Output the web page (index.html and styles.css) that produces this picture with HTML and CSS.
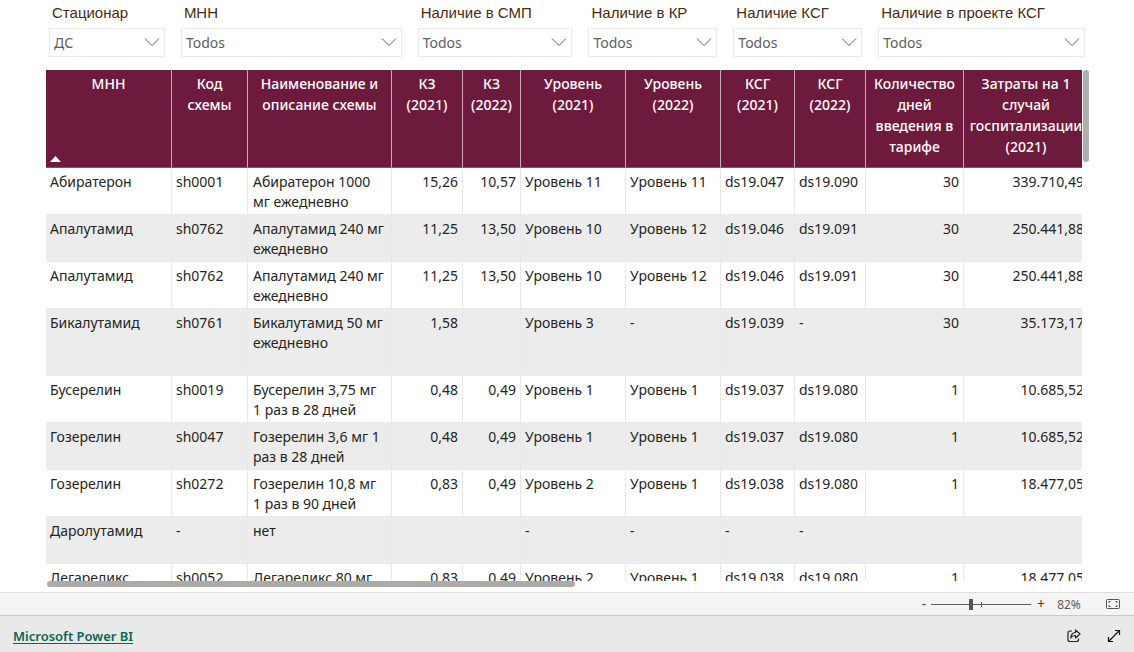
FILE: index.html
```html
<!DOCTYPE html>
<html lang="ru">
<head>
<meta charset="utf-8">
<meta name="viewport" content="width=device-width, initial-scale=1">
<title>Microsoft Power BI</title>
<link rel="stylesheet" href="styles.css">
</head>
<body>
<svg class="defs" aria-hidden="true">
  <symbol id="chevron" viewBox="0 0 16 10"><path d="M1 1.5 8 8.5 15 1.5" fill="none" stroke="currentColor"/></symbol>
</svg>
<main class="report">
  <form class="filters">
    <div class="filter"><label for="f1">Стационар</label><div class="pick"><select id="f1"><option>ДС</option></select><svg class="chev"><use href="#chevron"/></svg></div></div>
    <div class="filter"><label for="f2">МНН</label><div class="pick"><select id="f2"><option>Todos</option></select><svg class="chev"><use href="#chevron"/></svg></div></div>
    <div class="filter"><label for="f3">Наличие в СМП</label><div class="pick"><select id="f3"><option>Todos</option></select><svg class="chev"><use href="#chevron"/></svg></div></div>
    <div class="filter"><label for="f4">Наличие в КР</label><div class="pick"><select id="f4"><option>Todos</option></select><svg class="chev"><use href="#chevron"/></svg></div></div>
    <div class="filter"><label for="f5">Наличие КСГ</label><div class="pick"><select id="f5"><option>Todos</option></select><svg class="chev"><use href="#chevron"/></svg></div></div>
    <div class="filter"><label for="f6">Наличие в проекте КСГ</label><div class="pick"><select id="f6"><option>Todos</option></select><svg class="chev"><use href="#chevron"/></svg></div></div>
  </form>
  <section class="grid">
    <div class="scroller">
      <table class="data">
        <colgroup><col class="c-mnn"><col class="c-code"><col class="c-name"><col class="c-kz1"><col class="c-kz2"><col class="c-lvl1"><col class="c-lvl2"><col class="c-ksg1"><col class="c-ksg2"><col class="c-days"><col class="c-cost"></colgroup>
        <thead>
          <tr><th>МНН<svg class="sort" viewBox="0 0 11 6"><path d="M0 6 5.500 0 11 6Z" fill="#fff"/></svg></th><th>Код схемы</th><th>Наименование и описание схемы</th><th>КЗ (2021)</th><th>КЗ (2022)</th><th>Уровень (2021)</th><th>Уровень (2022)</th><th>КСГ (2021)</th><th>КСГ (2022)</th><th>Количество дней введения в тарифе</th><th>Затраты на 1 случай госпитализации (2021)</th></tr>
        </thead>
        <tbody>
          <tr><td>Абиратерон</td><td>sh0001</td><td class="name">Абиратерон 1000 мг ежедневно</td><td class="n">15,26</td><td class="n">10,57</td><td>Уровень 11</td><td>Уровень 11</td><td>ds19.047</td><td>ds19.090</td><td class="n">30</td><td class="n">339.710,49</td></tr>
          <tr><td>Апалутамид</td><td>sh0762</td><td class="name">Апалутамид 240 мг ежедневно</td><td class="n">11,25</td><td class="n">13,50</td><td>Уровень 10</td><td>Уровень 12</td><td>ds19.046</td><td>ds19.091</td><td class="n">30</td><td class="n">250.441,88</td></tr>
          <tr><td>Апалутамид</td><td>sh0762</td><td class="name">Апалутамид 240 мг ежедневно</td><td class="n">11,25</td><td class="n">13,50</td><td>Уровень 10</td><td>Уровень 12</td><td>ds19.046</td><td>ds19.091</td><td class="n">30</td><td class="n">250.441,88</td></tr>
          <tr class="tall"><td>Бикалутамид</td><td>sh0761</td><td class="name">Бикалутамид 50 мг ежедневно</td><td class="n">1,58</td><td></td><td>Уровень 3</td><td>-</td><td>ds19.039</td><td>-</td><td class="n">30</td><td class="n">35.173,17</td></tr>
          <tr><td>Бусерелин</td><td>sh0019</td><td class="name">Бусерелин 3,75 мг 1 раз в 28 дней</td><td class="n">0,48</td><td class="n">0,49</td><td>Уровень 1</td><td>Уровень 1</td><td>ds19.037</td><td>ds19.080</td><td class="n">1</td><td class="n">10.685,52</td></tr>
          <tr><td>Гозерелин</td><td>sh0047</td><td class="name">Гозерелин 3,6 мг 1 раз в 28 дней</td><td class="n">0,48</td><td class="n">0,49</td><td>Уровень 1</td><td>Уровень 1</td><td>ds19.037</td><td>ds19.080</td><td class="n">1</td><td class="n">10.685,52</td></tr>
          <tr><td>Гозерелин</td><td>sh0272</td><td class="name">Гозерелин 10,8 мг 1 раз в 90 дней</td><td class="n">0,83</td><td class="n">0,49</td><td>Уровень 2</td><td>Уровень 1</td><td>ds19.038</td><td>ds19.080</td><td class="n">1</td><td class="n">18.477,05</td></tr>
          <tr><td>Даролутамид</td><td>-</td><td class="name">нет</td><td></td><td></td><td>-</td><td>-</td><td>-</td><td>-</td><td></td><td></td></tr>
          <tr><td>Дегареликс</td><td>sh0052</td><td class="name">Дегареликс 80 мг</td><td class="n">0,83</td><td class="n">0,49</td><td>Уровень 2</td><td>Уровень 1</td><td>ds19.038</td><td>ds19.080</td><td class="n">1</td><td class="n">18.477,05</td></tr>
        </tbody>
      </table>
    </div>
    <div class="vbar"></div>
    <div class="hbar"></div>
  </section>
</main>
<div class="zoombar">
  <button class="step" type="button" aria-label="Zoom out">-</button>
  <input class="range" type="range" min="0" max="100" value="40" aria-label="Zoom">
  <button class="step plus" type="button" aria-label="Zoom in">+</button>
  <button class="percent" type="button">82%</button>
  <button class="icon" type="button" aria-label="Fit to page"><svg width="14" height="10" viewBox="0 0 14 10" fill="none" stroke="#555"><rect x=".5" y=".5" width="13" height="9" rx="1"/><path d="M3 4V2.500H4.500M9.500 2.500H11V4M11 6V7.500H9.500M4.500 7.500H3V6"/></svg></button>
</div>
<footer class="footer">
  <a class="brand" href="#">Microsoft Power BI</a>
  <button class="icon" type="button" aria-label="Share"><svg width="14" height="14" viewBox="0 0 14 14" fill="none" stroke="#222" stroke-width="1.200" stroke-linejoin="round"><path d="M5 2H3Q1 2 1 4V10.500Q1 12.500 3 12.500H9.500Q11.500 12.500 11.500 10.500V9.500"/><path d="M8.500 1 13 5 8.500 9V6.500Q5.500 6.300 3.800 9 4 4 8.500 3.500Z"/></svg></button>
  <button class="icon" type="button" aria-label="Full screen"><svg width="14" height="14" viewBox="0 0 14 14" fill="none" stroke="#111" stroke-width="1.200"><path d="M1.500 12.500 12.500 1.500M8 1.500H12.500V6M1.500 8V12.500H6"/></svg></button>
</footer>
</body>
</html>
```
FILE: styles.css
```css
* { box-sizing: border-box; }
body {
  margin: 0;
  height: 100vh;
  display: flex;
  flex-direction: column;
  background: #fff;
  font-family: "Noto Sans", "Open Sans", sans-serif;
  font-size: 14px;
  color: #252423;
}
button { border: 0; padding: 0; background: none; font: inherit; color: inherit; }
svg { display: block; }
.defs { position: absolute; width: 0; height: 0; }

.report { flex: 1; min-height: 0; display: flex; flex-direction: column; }
.filters {
  display: grid;
  grid-template-columns: 116fr 221fr 155fr 129fr 129fr 207fr;
  gap: 16px;
  padding: 4px 49px 13px;
}
.filter { display: flex; flex-direction: column; gap: 6px; min-width: 0; }
.filter label {
  padding-left: 3px;
  font: 15px/18px "Liberation Sans", sans-serif;
  color: #4a2a10;
  white-space: nowrap;
}
.pick { position: relative; display: flex; color: #605e5c; }
.pick select {
  appearance: none;
  width: 100%;
  height: 29px;
  padding: 1px 24px 0 4px;
  border: 1px solid #eaeaea;
  border-radius: 0;
  background: #fff;
  font: 14px/20px "Noto Sans", sans-serif;
  color: inherit;
}
.chev { position: absolute; right: 5px; top: 9px; width: 16px; height: 10px; pointer-events: none; }

.grid {
  flex: 1;
  min-height: 0;
  display: grid;
  grid-template-columns: minmax(0, 1fr) 6px;
  grid-template-rows: minmax(0, 1fr) 6px;
  column-gap: 1px;
  padding: 0 45px 5px 46px;
}
.scroller { overflow: hidden; }
.data { table-layout: fixed; width: 1043px; border-collapse: separate; border-spacing: 0; }
.c-mnn { width: 126px; }
.c-code { width: 76px; }
.c-name { width: 144px; }
.c-kz1, .c-ksg2 { width: 71px; }
.c-kz2 { width: 58px; }
.c-lvl1 { width: 105px; }
.c-lvl2 { width: 95px; }
.c-ksg1 { width: 74px; }
.c-days { width: 98px; }
.c-cost { width: 125px; }
.data th {
  position: relative;
  height: 98px;
  padding: 3px 5px 0;
  vertical-align: top;
  background: #6d1a3d;
  border-right: 1px solid #c9a9b6;
  border-bottom: 1px solid #2f6fb5;
  color: #fff;
  font-weight: 500;
  line-height: 21px;
}
.sort { position: absolute; left: 4px; bottom: 5px; width: 11px; height: 6px; }
.data td {
  height: 47px;
  padding: 4px 4px 0;
  vertical-align: top;
  border-right: 1px solid #e8e8e8;
  border-bottom: 1px solid #e8e8e8;
  line-height: 20px;
}
.data .name { padding: 4px 7px 0 5px; }
.data .tall td { height: 67px; }
.data tr:nth-child(even) td { background: #ececec; }
.data .n { text-align: right; }
.vbar { height: 92px; border-radius: 3px; background: #b0aeac; }
.hbar { width: 51%; margin-left: 1px; border-radius: 3px; background: #adabaa; }

.zoombar {
  display: flex;
  align-items: center;
  justify-content: flex-end;
  height: 23px;
  padding-right: 14px;
  border-top: 1px solid #dcdcdc;
  background: #f4f4f4;
  color: #605e5c;
}
.step { width: 14px; font-size: 14px; line-height: 20px; color: #444; }
.range {
  appearance: none;
  width: 100px;
  height: 11px;
  margin: 0;
  background:
    linear-gradient(#605e5c, #605e5c) 50px 50% / 1px 5px no-repeat,
    linear-gradient(#605e5c, #605e5c) 0 50% / 100% 1px no-repeat;
}
.range::-webkit-slider-thumb { appearance: none; width: 4px; height: 11px; background: #555; }
.plus { width: 20px; }
.percent { width: 36px; font-size: 12px; }
.zoombar .icon { margin-left: 19px; }
.footer {
  display: flex;
  align-items: center;
  gap: 26px;
  height: 37px;
  padding: 4px 13px 0;
  border-top: 1px solid #c8c8c8;
  background: #e9e9e9;
}
.brand { margin-right: auto; font-size: 13px; font-weight: 600; color: #0b6655; text-underline-offset: 2px; }
```
